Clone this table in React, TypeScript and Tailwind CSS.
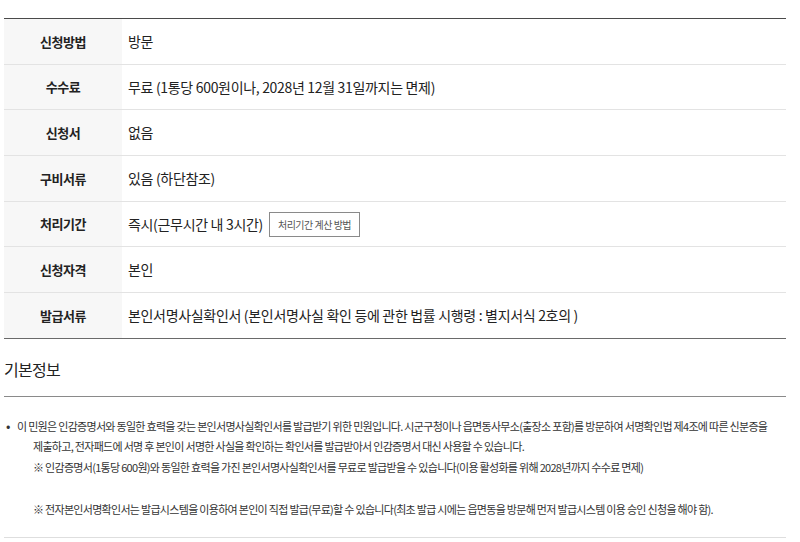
import React from "react"

const ROWS: { label: string; value: React.ReactNode }[] = [
  { label: "신청방법", value: "방문" },
  { label: "수수료", value: "무료 (1통당 600원이나, 2028년 12월 31일까지는 면제)" },
  { label: "신청서", value: "없음" },
  { label: "구비서류", value: "있음 (하단참조)" },
  {
    label: "처리기간",
    value: (
      <span className="flex items-center gap-[6px]">
        <span>즉시(근무시간 내 3시간)</span>
        <span className="border border-[#8a8a8a] h-[25px] px-[8px] flex items-center text-[10px] text-[#555] tracking-[-0.5px]">
          처리기간 계산 방법
        </span>
      </span>
    ),
  },
  { label: "신청자격", value: "본인" },
  { label: "발급서류", value: "본인서명사실확인서 (본인서명사실 확인 등에 관한 법률 시행령 : 별지서식 2호의 )" },
]

const App = () => {
  return (
    <div
      className="w-[800px] h-[542px] bg-white overflow-hidden text-[#222]"
      style={{ fontFamily: '"Noto Sans CJK KR", "Noto Sans", sans-serif' }}
    >
      <div className="pt-[18px] pl-[4px] w-[786px]">
        {/* Info table */}
        <div className="border-t border-[#4a4a4a]">
          {ROWS.map((row, index) => (
            <div
              key={index}
              className={`flex h-[45.7px] border-b ${
                index === ROWS.length - 1 ? "border-[#6a6a6a]" : "border-[#e3e3e3]"
              }`}
            >
              <div className="w-[118px] bg-[#f7f7f7] flex items-center justify-center text-[13px] font-bold tracking-[-0.5px]">
                {row.label}
              </div>
              <div className="flex-1 flex items-center pl-[6px] text-[14px] tracking-[-0.32px]">
                {row.value}
              </div>
            </div>
          ))}
        </div>

        {/* 기본정보 */}
        <h3 className="mt-[19px] text-[16px] tracking-[-0.7px] leading-[22px] text-[#222]">기본정보</h3>
        <div className="mt-[16px] border-t border-[#8a8a8a]" />

        <div className="pt-[19px] text-[11px] leading-[20.5px] tracking-[-0.7px] text-[#333] whitespace-nowrap">
          <div className="flex">
            <span className="w-[13px] shrink-0 pl-[2px] text-[13px] text-[#333]">•</span>
            <div>
              <div>
                이 민원은 인감증명서와 동일한 효력을 갖는 본인서명사실확인서를 발급받기 위한 민원입니다. 시군구청이나 읍면동사무소(출장소 포함)를 방문하여 서명확인법 제4조에 따른 신분증을
              </div>
              <div className="pl-[16px]">
                제출하고, 전자패드에 서명 후 본인이 서명한 사실을 확인하는 확인서를 발급받아서 인감증명서 대신 사용할 수 있습니다.
              </div>
              <div className="pl-[16px]">
                ※ 인감증명서(1통당 600원)와 동일한 효력을 가진 본인서명사실확인서를 무료로 발급받을 수 있습니다(이용 활성화를 위해 2028년까지 수수료 면제)
              </div>
              <div className="pl-[16px] mt-[22px]">
                ※ 전자본인서명확인서는 발급시스템을 이용하여 본인이 직접 발급(무료)할 수 있습니다(최초 발급 시에는 읍면동을 방문해 먼저 발급시스템 이용 승인 신청을 해야 함).
              </div>
            </div>
          </div>
        </div>
        <div className="mt-[17px] border-t border-[#dedede]" />
      </div>
    </div>
  )
}

export default App
